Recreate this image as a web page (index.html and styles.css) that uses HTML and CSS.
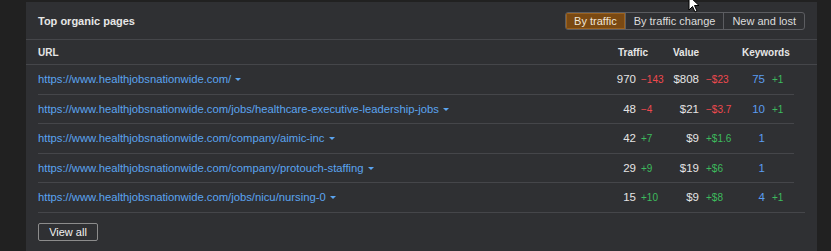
FILE: index.html
```html
<!DOCTYPE html>
<html lang="en">
<head>
    <meta charset="UTF-8">
    <title>Top organic pages</title>
    <link rel="stylesheet" href="styles.css">
</head>
<body>
    <div class="panel">
        <div class="panel-head">
            <h3 class="panel-title">Top organic pages</h3>
            <div class="tabs">
                <button class="tab active">By traffic</button>
                <button class="tab">By traffic change</button>
                <button class="tab">New and lost</button>
            </div>
        </div>

        <div class="col-head">
            <span>URL</span>
            <span>Traffic</span>
            <span>Value</span>
            <span>Keywords</span>
        </div>

        <div class="rows">
            <div class="row">
                <span class="url">https://www.healthjobsnationwide.com/ <i class="caret"></i></span>
                <span class="num">970</span><span class="chg down">&minus;143</span>
                <span class="num">$808</span><span class="chg down wide">&minus;$23</span>
                <span class="num kw">75</span><span class="chg up wide">+1</span>
            </div>
            <div class="row">
                <span class="url">https://www.healthjobsnationwide.com/jobs/healthcare-executive-leadership-jobs <i class="caret"></i></span>
                <span class="num">48</span><span class="chg down">&minus;4</span>
                <span class="num">$21</span><span class="chg down wide">&minus;$3.7</span>
                <span class="num kw">10</span><span class="chg up wide">+1</span>
            </div>
            <div class="row">
                <span class="url">https://www.healthjobsnationwide.com/company/aimic-inc <i class="caret"></i></span>
                <span class="num">42</span><span class="chg up">+7</span>
                <span class="num">$9</span><span class="chg up wide">+$1.6</span>
                <span class="num kw">1</span><span class="chg up wide"></span>
            </div>
            <div class="row">
                <span class="url">https://www.healthjobsnationwide.com/company/protouch-staffing <i class="caret"></i></span>
                <span class="num">29</span><span class="chg up">+9</span>
                <span class="num">$19</span><span class="chg up wide">+$6</span>
                <span class="num kw">1</span><span class="chg up wide"></span>
            </div>
            <div class="row">
                <span class="url">https://www.healthjobsnationwide.com/jobs/nicu/nursing-0 <i class="caret"></i></span>
                <span class="num">15</span><span class="chg up">+10</span>
                <span class="num">$9</span><span class="chg up wide">+$8</span>
                <span class="num kw">4</span><span class="chg up wide">+1</span>
            </div>
        </div>

        <div class="panel-foot">
            <button class="view-all">View all</button>
        </div>
    </div>

    <svg class="cursor" width="14" height="20" viewBox="0 0 14 20">
        <path d="M1 1 L1 15 L4.5 11.5 L7 17 L9 16 L6.5 10.5 L11 10.5 Z" fill="#fff" stroke="#000" stroke-width="1"/>
    </svg>
</body>
</html>
```

FILE: styles.css
```css
/* Dark dashboard card */
body {
    margin: 0;
    padding: 2px 0 0 26px;
    background: #212121;
    font-family: "Liberation Sans", Arial, sans-serif;
    color: #e4e4e4;
    overflow: hidden;
}

.panel {
    width: 791px;
    min-height: 260px;
    background: #2f3033;
}

/* Header */
.panel-head {
    height: 37px;
    padding: 0 12px;
    display: flex;
    align-items: center;
    justify-content: space-between;
    border-bottom: 1px solid #45464a;
}

.panel-title {
    margin: 0;
    font-size: 11px;
    font-weight: bold;
    color: #e6e6e6;
}

.tabs {
    display: flex;
    border: 1px solid #5c5d61;
    border-radius: 3px;
    overflow: hidden;
}

.tab {
    height: 16px;
    padding: 0 8px;
    border: none;
    border-left: 1px solid #5c5d61;
    background: transparent;
    font-family: inherit;
    font-size: 11px;
    line-height: 16px;
    color: #dcdcdc;
}

.tab:first-child {
    border-left: none;
}

.tab.active {
    background: #7a4912;
    color: #f0e6d8;
    box-shadow: inset 0 0 0 1px #9a6220;
}

/* Column headings */
.col-head {
    height: 24px;
    padding: 0 12px;
    display: grid;
    grid-template-columns: 1fr 55px 69px 63px;
    align-items: center;
    border-bottom: 1px solid #45464a;
    font-size: 10px;
    font-weight: bold;
    color: #e6e6e6;
}

/* Rows */
.rows {
    margin: 0 12px;
    border-bottom: 1px solid #45464a;
}

.row {
    height: 29.6px;
    margin-right: 11px;
    padding-top: 7px;
    box-sizing: border-box;
    display: grid;
    grid-template-columns: 1fr 40px 29px 34px 36px 30px 29px;
    align-items: baseline;
    border-bottom: 1px solid #45464a;
    font-size: 11.25px;
    line-height: 14px;
}

.row:last-child {
    border-bottom: none;
    height: 28.6px;
}

.url {
    color: #5ba4f0;
    white-space: nowrap;
}

.caret {
    display: inline-block;
    margin-left: 1px;
    width: 0;
    height: 0;
    border-left: 3px solid transparent;
    border-right: 3px solid transparent;
    border-top: 3px solid #5ba4f0;
    vertical-align: 2px;
}

.num {
    text-align: right;
    font-size: 11.5px;
}

.num.kw {
    color: #5b9cf0;
}

.chg {
    padding-left: 5px;
    font-size: 10px;
}

.chg.wide {
    padding-left: 7px;
}

.down {
    color: #f0494e;
}

.up {
    color: #3dbb5d;
}

/* Footer */
.panel-foot {
    padding: 9px 12px;
}

.view-all {
    width: 60px;
    height: 18px;
    padding: 0;
    border: 1px solid #8c8c8c;
    border-radius: 2px;
    background: transparent;
    font-family: inherit;
    font-size: 11px;
    color: #f2f2f2;
}

.cursor {
    position: absolute;
    left: 688px;
    top: -5px;
}
```
